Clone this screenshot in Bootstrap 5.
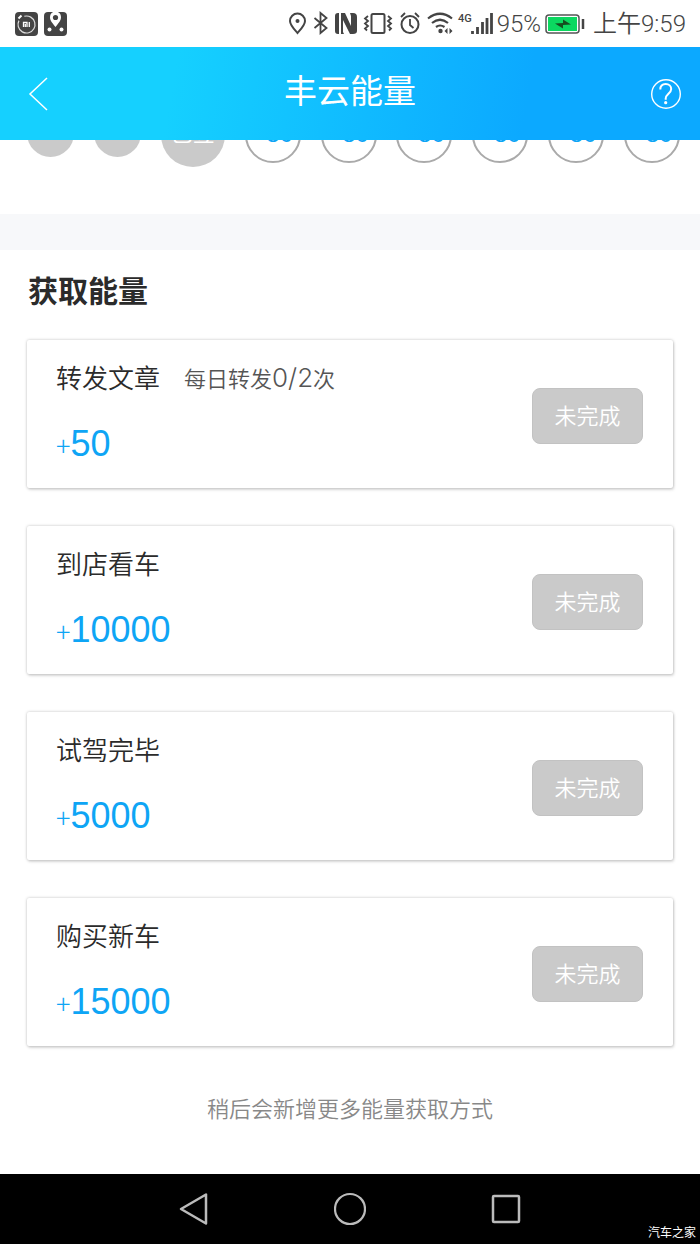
<!DOCTYPE html>
<html lang="zh-CN">
<head>
<meta charset="utf-8">
<meta name="viewport" content="width=device-width, initial-scale=1">
<title>丰云能量</title>
<link href="https://cdn.jsdelivr.net/npm/bootstrap@5.3.0/dist/css/bootstrap.min.css" rel="stylesheet">
<style>
  body { font-family: "Liberation Sans", "Noto Sans CJK SC", sans-serif; color: #2b2b2b; background: #fff; }
  .status-bar { height: 47px; padding: 0 14px; color: #444; font-family: Roboto, "Noto Sans CJK SC", sans-serif; }
  .status-bar svg { flex: none; }
  .status-text { font-size: 24px; line-height: 32px; font-weight: 350; }
  .app-header { height: 93px; padding: 0 18px 0 24px; background: linear-gradient(100deg, #15d0ff 25%, #0ca9ff 75%); }
  .app-title { font-size: 33px; line-height: 40px; font-weight: 400; padding-bottom: 4px; }
  .sign-strip { margin-top: -37px; padding: 0 20px 47px 27px; }
  .day { flex: none; width: 56px; height: 56px; padding-bottom: 2px; border-radius: 50%; font-size: 24px; line-height: 28px; border: 2px solid #aaa; color: #0ea5f5; }
  .day-past { width: 47px; height: 47px; margin-bottom: 4px; border: 0; background: #cacaca; }
  .day-signed { width: 64px; height: 64px; border: 0; background: #cacaca; color: #fff; font-size: 22px; }
  .divider-band { height: 36px; background: #f7f8fa; }
  .energy { padding: 22px 27px 48px; }
  .energy-heading { font-size: 30px; line-height: 40px; font-weight: 700; margin: 0 1px 28px; }
  .task-list { gap: 38px; }
  .task { padding: 23px 30px 24px 29px; background: #fff; border-radius: 2px; box-shadow: 0 0 3px rgba(0,0,0,.25), 1px 2px 3px rgba(0,0,0,.12); }
  .task-name { font-size: 26px; line-height: 32px; font-weight: 350; }
  .task-note { font-size: 22px; line-height: 34px; font-weight: 350; color: #555; }
  .task-count { font-family: Inter, sans-serif; font-size: 26px; font-weight: 300; line-height: 1; }
  .task-points { font-size: 36px; line-height: 40px; color: #0ea5f5; margin-top: 29px; }
  .task-name-row { height: 32px; }
  .task-plus { font-family: "Noto Sans CJK SC", sans-serif; font-weight: 300; font-size: 27px; line-height: 32px; }
  .btn-state, .btn-state:disabled { width: 111px; height: 56px; margin-top: 4px; padding: 2px 0 0; border-radius: 8px; border: 1px solid #c2c2c2; background: #cacaca; color: #fff; opacity: 1; font-size: 22px; line-height: 32px; font-weight: 350; }
  .more-note { font-size: 22px; line-height: 32px; font-weight: 350; color: #888; margin-top: 48px; }
  .sys-nav { height: 70px; background: #000; }
  .sys-keys { gap: 124px; }
  .watermark { right: 4px; bottom: 0; color: #fff; font-size: 12px; line-height: 22px; }
</style>
</head>
<body>
<div class="status-bar d-flex align-items-center justify-content-between">
  <div class="d-flex gap-1">
    <svg width="25" height="24" viewBox="0 0 25 24"><rect x="1" width="23" height="24" rx="4" fill="#444"/><circle cx="12.500" cy="12.500" r="8.500" fill="none" stroke="#ddd" stroke-width="1.200" stroke-dasharray="46 8" transform="rotate(-105 12.500 12.500)"/><path d="M4.500 6.500l3-3" stroke="#fff" stroke-width="2"/><path d="M9.500 15v-4.500h3.500V15M11.300 12v3M15.300 10v5" fill="none" stroke="#fff" stroke-width="1.300"/></svg>
    <svg width="25" height="24" viewBox="0 0 25 24"><rect x="1" width="23" height="24" rx="4" fill="#444"/><path d="M12.500 15C9 10.500 7 8.500 7 5a5.500 5.500 0 0 1 11 0c0 3.500-2 5.500-5.500 10z" fill="#fff"/><circle cx="12.500" cy="5.500" r="2.600" fill="#444"/><circle cx="6.500" cy="17.500" r="2" fill="#fff"/><circle cx="18.500" cy="17.500" r="2" fill="#fff"/></svg>
  </div>
  <div class="d-flex align-items-center">
    <svg width="210" height="28" viewBox="288 10 210 28" fill="none" stroke="#444" stroke-width="2">
      <path d="M298.500 33C294 28 291 25 291 21a7.500 7.500 0 0 1 15 0c0 4-3 7-7.500 12z"/><circle cx="298.500" cy="21" r="2" fill="#444" stroke="none"/>
      <path d="M315.500 18l12 10-6 5V13l6 5-12 10" stroke-width="1.800"/>
      <path d="M340 13h-1q-3 0-3 3v15q0 3 3 3h1zM342 13h4l6 13V16l-1-3h3q4 0 4 4v14q0 3-4 3h-3l-7-14v12l1 2h-3z" fill="#444" stroke="none"/>
      <rect x="372.500" y="14" width="13" height="19" rx="1.500"/><path d="M369 16l-3 2.500 3 2.500-3 2.500 3 2.500-3 2.500 2 2M389 16l3 2.500-3 2.500 3 2.500-3 2.500 3 2.500-2 2" stroke-width="1.800"/>
      <circle cx="411" cy="24.500" r="8.500"/><path d="M411 19v6l3.500 3M402 17l4-4M420 17l-4-4" stroke-width="1.800"/>
      <path d="M429 18.500q12-9.500 24 0M433 23q8-6.500 16 0M437 27q4-3 8.500 0" stroke-width="2.200"/><circle cx="441.500" cy="31" r="2.200" fill="#444" stroke="none"/><path d="M448.500 28v6l-3-3zM450.500 28v6l3-3z" fill="#444" stroke="none"/>
      <path d="M473.500 31v3M478.500 27v7M483.500 22v12M488 18v16M492.500 13v21" stroke-width="2.800"/>
      <text x="459" y="22" font-size="11" font-weight="500" fill="#444" stroke="none">4G</text>
    </svg>
    <span class="status-text">95%</span>
    <svg class="ms-1 me-2" width="40" height="20" viewBox="0 0 40 20"><rect x="1" y="1" width="33" height="18" rx="3" fill="#fff" stroke="#555" stroke-width="1.500"/><rect x="3" y="3" width="29" height="14" fill="#0bd860"/><path d="M10 9.500l8-.5V5.500l8 5-8 .5v3.500z" fill="#164c20"/><path d="M38 5v10" stroke="#444" stroke-width="2.500"/></svg>
    <span class="status-text">上午9:59</span>
  </div>
</div>
<header class="app-header sticky-top d-flex align-items-center justify-content-between text-white">
  <a href="#" aria-label="返回" class="d-flex text-white"><svg width="26" height="36" viewBox="0 0 26 36"><path d="M23 2L6 18l17 16" fill="none" stroke="currentColor" stroke-width="1.500"/></svg></a>
  <h1 class="app-title m-0">丰云能量</h1>
  <a href="#" aria-label="帮助" class="d-flex text-white"><svg width="32" height="32" viewBox="0 0 32 32" fill="none" stroke="currentColor"><circle cx="16" cy="16" r="14.300" stroke-width="1.400"/><path d="M10.300 11.500C10.300 8 12.500 6 15.700 6s5.500 2 5.500 5c0 4.500-5.500 5-5.500 9.500v1.200" stroke-width="2"/><circle cx="15.700" cy="24.700" r="1.600" fill="currentColor" stroke="none"/></svg></a>
</header>
<main>
  <section class="sign-strip d-flex align-items-center justify-content-between">
    <span class="day day-past"></span>
    <span class="day day-past"></span>
    <span class="day day-signed d-flex align-items-center justify-content-center">已签</span>
    <span class="day d-flex align-items-center justify-content-center">+80</span>
    <span class="day d-flex align-items-center justify-content-center">+80</span>
    <span class="day d-flex align-items-center justify-content-center">+80</span>
    <span class="day d-flex align-items-center justify-content-center">+80</span>
    <span class="day d-flex align-items-center justify-content-center">+80</span>
    <span class="day d-flex align-items-center justify-content-center">+80</span>
  </section>
  <div class="divider-band"></div>
  <section class="energy">
    <h2 class="energy-heading">获取能量</h2>
    <div class="task-list d-flex flex-column">
      <article class="task d-flex align-items-center justify-content-between">
        <div><div class="task-name-row d-flex gap-4"><span class="task-name">转发文章</span><span class="task-note">每日转发<span class="task-count">0/2</span>次</span></div><div class="task-points"><span class="task-plus">+</span>50</div></div>
        <button type="button" class="btn btn-state" disabled>未完成</button>
      </article>
      <article class="task d-flex align-items-center justify-content-between">
        <div><div class="task-name">到店看车</div><div class="task-points"><span class="task-plus">+</span>10000</div></div>
        <button type="button" class="btn btn-state" disabled>未完成</button>
      </article>
      <article class="task d-flex align-items-center justify-content-between">
        <div><div class="task-name">试驾完毕</div><div class="task-points"><span class="task-plus">+</span>5000</div></div>
        <button type="button" class="btn btn-state" disabled>未完成</button>
      </article>
      <article class="task d-flex align-items-center justify-content-between">
        <div><div class="task-name">购买新车</div><div class="task-points"><span class="task-plus">+</span>15000</div></div>
        <button type="button" class="btn btn-state" disabled>未完成</button>
      </article>
    </div>
    <p class="more-note text-center mb-0">稍后会新增更多能量获取方式</p>
  </section>
</main>
<footer class="sys-nav position-relative d-flex align-items-center justify-content-center">
  <div class="sys-keys d-flex">
    <svg width="32" height="34" viewBox="0 0 32 34"><path d="M28 2.500v29L3 17z" fill="none" stroke="#bbb" stroke-width="2.500" stroke-linejoin="round"/></svg>
    <svg width="32" height="34" viewBox="0 0 32 34"><circle cx="16" cy="17" r="15" fill="none" stroke="#bbb" stroke-width="2.200"/></svg>
    <svg width="32" height="34" viewBox="0 0 32 34"><rect x="3" y="4" width="26" height="26" rx="1" fill="none" stroke="#bbb" stroke-width="2.500"/></svg>
  </div>
  <span class="watermark position-absolute">汽车之家</span>
</footer>
<script src="https://cdn.jsdelivr.net/npm/bootstrap@5.3.0/dist/js/bootstrap.bundle.min.js"></script>
</body>
</html>
